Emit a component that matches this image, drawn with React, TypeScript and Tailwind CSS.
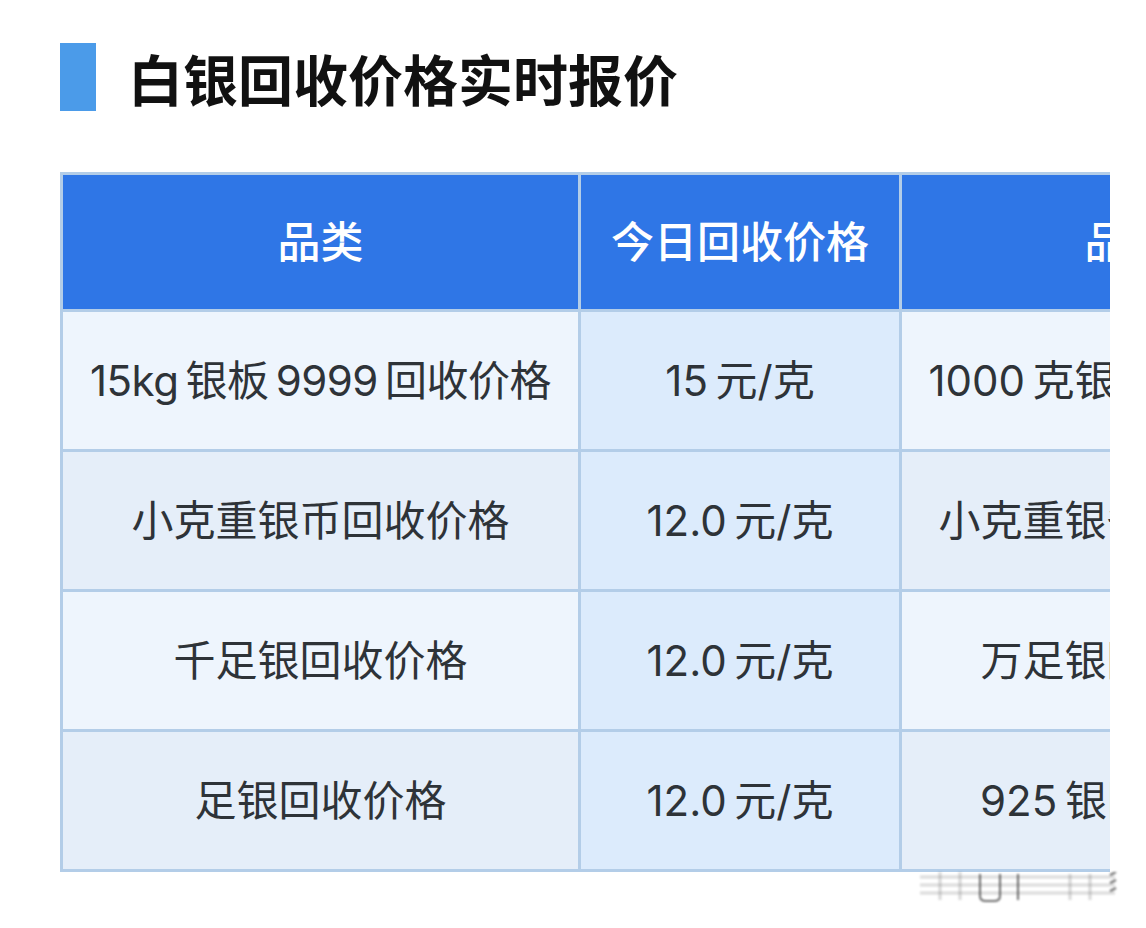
import React from "react";

const rows = [
  { a: "15kg\u2009银板\u20099999\u2009回收价格", b: "15\u2009元/克", c: "1000\u2009克银条回收价格", d: "15\u2009元/克" },
  { a: "小克重银币回收价格", b: "12.0\u2009元/克", c: "小克重银条回收价格", d: "12.0\u2009元/克" },
  { a: "千足银回收价格", b: "12.0\u2009元/克", c: "万足银回收价格", d: "12.0\u2009元/克" },
  { a: "足银回收价格", b: "12.0\u2009元/克", c: "925\u2009银回收价格", d: "11.0\u2009元/克" },
];

const font = { fontFamily: 'Inter, "Noto Sans CJK SC", sans-serif' };

export default function App() {
  return (
    <div className="w-[1146px] h-[928px] bg-white overflow-hidden relative" style={font}>
      <div className="flex items-center gap-[32px] pl-[60px] pt-[43px]">
        <div className="w-[36px] h-[68px] bg-[#4b9be9]" />
        <h1 className="text-[55px] font-bold text-[#111] leading-none" style={{ fontFamily: '"Noto Sans CJK SC", sans-serif' }}>
          白银回收价格实时报价
        </h1>
      </div>
      <div className="ml-[60px] mt-[61px] w-[1050px] overflow-hidden">
        <div className="grid grid-cols-[515px_318px_451px_318px] gap-[3px] p-[3px] bg-[#b3cde8] w-max">
          {["品类", "今日回收价格", "品类", "今日回收价格"].map((h, i) => (
            <div key={i} className="h-[134px] bg-[#2f76e6] flex items-center justify-center text-white text-[43px] font-medium whitespace-nowrap">
              {h}
            </div>
          ))}
          {rows.map((r, i) => {
            const odd = i % 2 === 0;
            const side = odd ? "bg-[#eef5fd]" : "bg-[#e5eef9]";
            return (
              <React.Fragment key={i}>
                <div className={`h-[137px] ${side} flex items-center justify-center text-[#2e3338] text-[42px] whitespace-nowrap ${i === 0 ? "tracking-[-0.5px]" : ""}`}>{r.a}</div>
                <div className="h-[137px] bg-[#dcebfc] flex items-center justify-center text-[#2e3338] text-[42px] whitespace-nowrap">{r.b}</div>
                <div className={`h-[137px] ${side} flex items-center justify-center text-[#2e3338] text-[42px] whitespace-nowrap`}>{r.c}</div>
                <div className="h-[137px] bg-[#dcebfc] flex items-center justify-center text-[#2e3338] text-[42px] whitespace-nowrap">{r.d}</div>
              </React.Fragment>
            );
          })}
        </div>
      </div>
      <svg className="absolute left-[910px] top-[872px] blur-[1px]" width="215" height="32" viewBox="0 0 215 32">
        <g opacity="0.3" stroke="#888" strokeWidth="3">
          <line x1="10" y1="5" x2="205" y2="5" />
          <line x1="10" y1="13" x2="205" y2="13" />
          <line x1="10" y1="21" x2="205" y2="21" />
        </g>
        <g opacity="0.7" stroke="#333" strokeWidth="2" fill="none">
          <path d="M70 2 V24 Q70 29 76 29 H84 Q90 29 90 24 V2" />
          <line x1="108" y1="2" x2="108" y2="28" />
          <path d="M200 3 L206 0 M200 11 L206 8 M200 19 L206 16" />
        </g>
        <g opacity="0.25" stroke="#666" strokeWidth="3">
          <line x1="30" y1="0" x2="30" y2="28" />
          <line x1="50" y1="0" x2="50" y2="28" />
          <line x1="160" y1="2" x2="160" y2="28" />
          <line x1="180" y1="2" x2="180" y2="28" />
        </g>
      </svg>
    </div>
  );
}
